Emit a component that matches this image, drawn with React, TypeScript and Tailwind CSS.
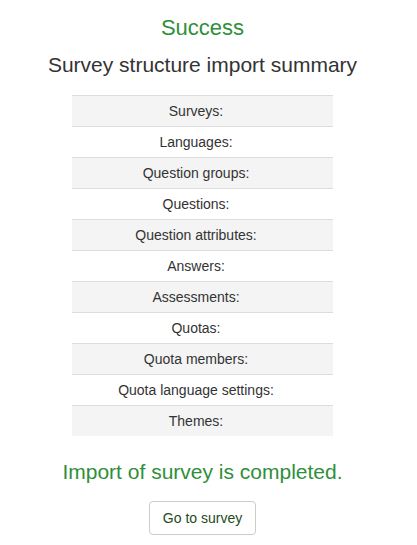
import React from "react";

const rows = [
  "Surveys:",
  "Languages:",
  "Question groups:",
  "Questions:",
  "Question attributes:",
  "Answers:",
  "Assessments:",
  "Quotas:",
  "Quota members:",
  "Quota language settings:",
  "Themes:",
];

export default function App() {
  return (
    <div
      className="w-[417px] h-[545px] bg-white text-[#333]"
      style={{ fontFamily: '"Liberation Sans", Arial, sans-serif' }}
    >
      <div className="w-[405px] flex flex-col items-center">
        <h1 className="mt-[14px] text-[22px] leading-[28px] text-[#2f8f3a]">Success</h1>
        <h2 className="mt-[10px] text-[21px] leading-[26px] text-[#333]">Survey structure import summary</h2>
        <div className="mt-[17px] w-[261px] flex flex-col">
          {rows.map((r, i) => (
            <div
              key={r}
              className={`h-[31px] flex items-center justify-center pr-[13px] border-t border-[#dddddd] text-[14px] ${
                i % 2 === 0 ? "bg-[#f4f4f4]" : "bg-white"
              }`}
            >
              {r}
            </div>
          ))}
        </div>
        <p className="mt-[23px] text-[21px] leading-[26px] text-[#2f8f3a]">Import of survey is completed.</p>
        <button className="mt-[16px] h-[34px] px-[13px] border border-[#cccccc] rounded-[4px] bg-white text-[14px] text-[#1e4a22]">
          Go to survey
        </button>
      </div>
    </div>
  );
}
